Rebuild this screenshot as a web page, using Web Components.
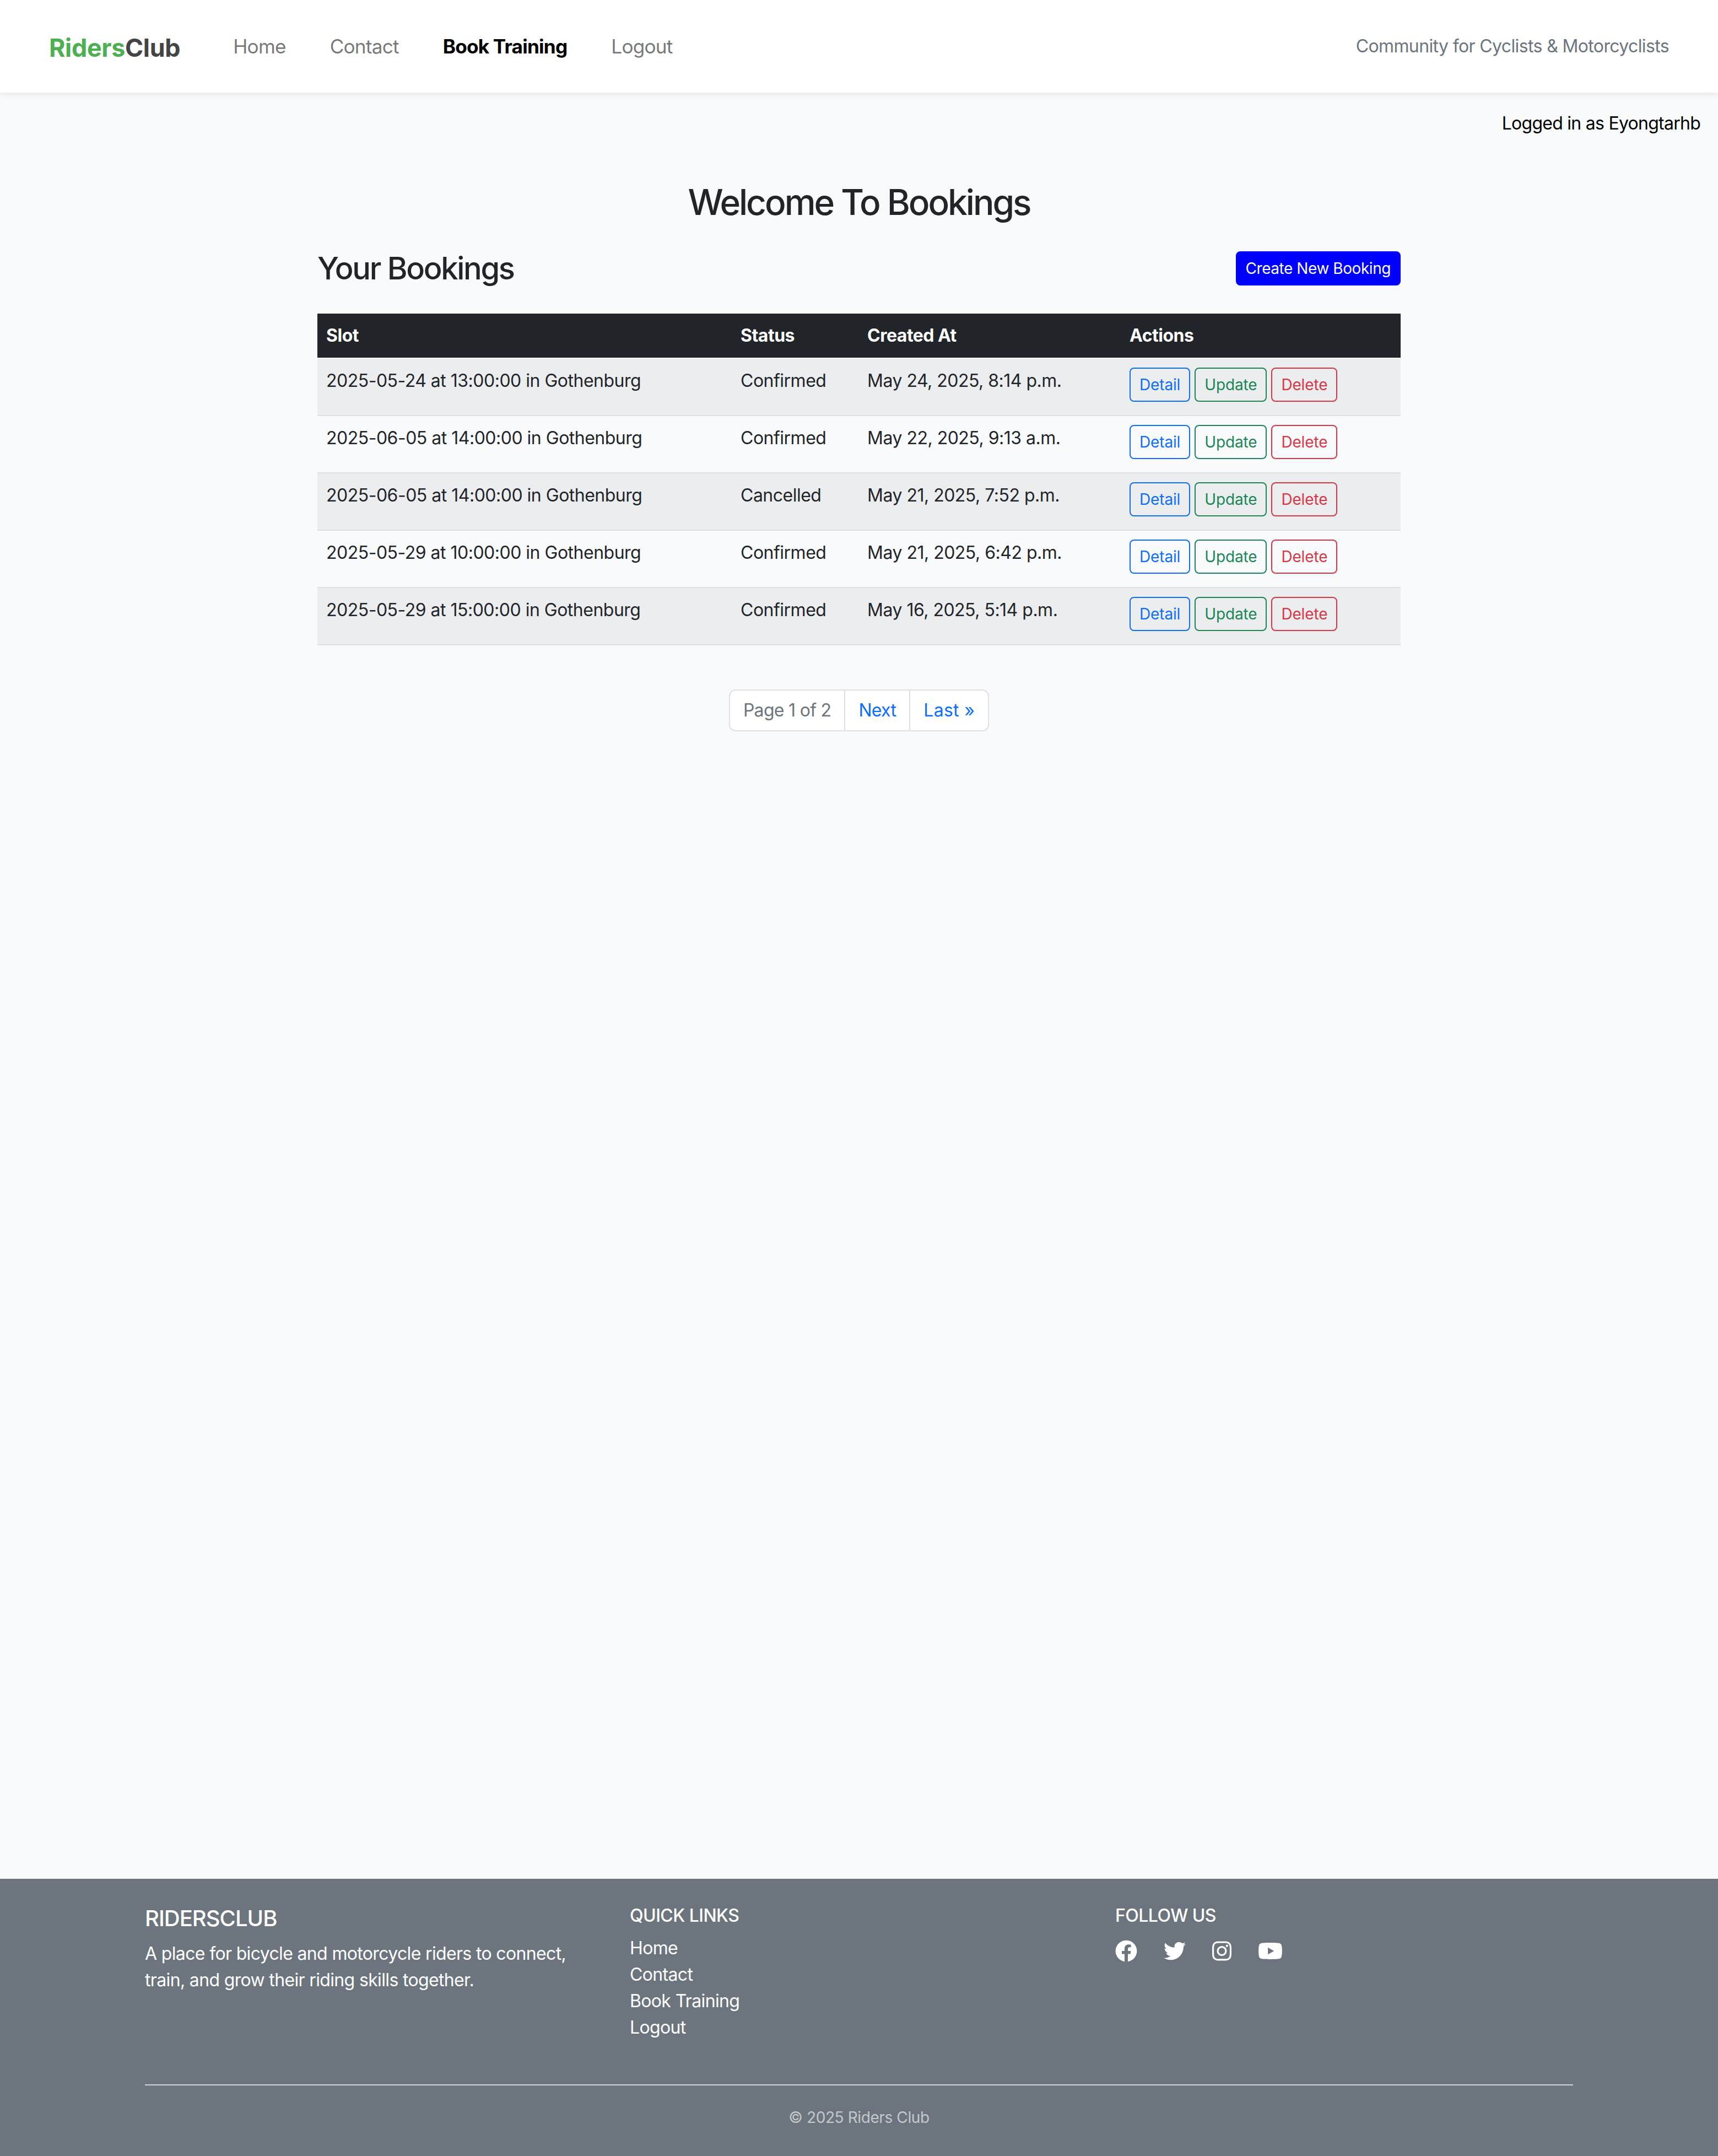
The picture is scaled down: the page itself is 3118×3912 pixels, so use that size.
<!DOCTYPE html>
<html lang="en">
<head>
<meta charset="utf-8">
<title>Bookings</title>
<style>
    html, body { margin: 0; padding: 0; }
    body {
        min-height: 3912px;
        display: flex;
        flex-direction: column;
        background: #f9fafb;
        color: #212529;
        font-family: Inter, "Liberation Sans", sans-serif;
        font-size: 32px;
        line-height: 1.5;
    }
    bookings-page { flex: 1; }
</style>
</head>
<body>
    <site-navbar></site-navbar>
    <bookings-page>
        <booking-table>
            <booking-row slot-time="2025-05-24 at 13:00:00 in Gothenburg" status="Confirmed" created="May 24, 2025, 8:14 p.m."></booking-row>
            <booking-row slot-time="2025-06-05 at 14:00:00 in Gothenburg" status="Confirmed" created="May 22, 2025, 9:13 a.m."></booking-row>
            <booking-row slot-time="2025-06-05 at 14:00:00 in Gothenburg" status="Cancelled" created="May 21, 2025, 7:52 p.m."></booking-row>
            <booking-row slot-time="2025-05-29 at 10:00:00 in Gothenburg" status="Confirmed" created="May 21, 2025, 6:42 p.m."></booking-row>
            <booking-row slot-time="2025-05-29 at 15:00:00 in Gothenburg" status="Confirmed" created="May 16, 2025, 5:14 p.m."></booking-row>
        </booking-table>
        <page-nav></page-nav>
    </bookings-page>
    <site-footer></site-footer>

<script>
// navbar on top of every page
var template_navbar = document.createElement("template");
template_navbar.innerHTML = `
<style>
    :host {
        display: flex;
        align-items: center;
        height: 168px;
        padding: 0 89px;
        background: #fff;
        box-shadow: 0 2px 12px rgba(0,0,0,.1);
        position: relative;
    }
    .brand { font-size: 44.8px; font-weight: 700; letter-spacing: -0.3px; color: #444; margin-right: 96px; position: relative; top: 4px; }
    .brand span { color: #4caf50; }
    nav { display: flex; gap: 80px; flex: 1; font-size: 35.2px; letter-spacing: -0.8px; }
    nav a { color: rgba(0,0,0,.55); text-decoration: none; }
    nav a.active { color: #000; font-weight: 700; }
    .tag { color: #6c757d; letter-spacing: -0.63px; }
</style>
<div class="brand"><span>Riders</span>Club</div>
<nav>
    <a href="#">Home</a>
    <a href="#">Contact</a>
    <a href="#" class="active">Book Training</a>
    <a href="#">Logout</a>
</nav>
<div class="tag">Community for Cyclists &amp; Motorcyclists</div>
`;
class SiteNavbar extends HTMLElement {
    constructor(){
        super();
        this.attachShadow({mode:"open"});
    }
    connectedCallback(){
        this.shadowRoot.appendChild(template_navbar.content.cloneNode(true));
    }
}
customElements.define("site-navbar", SiteNavbar);

// headings + the slot for table and pagination
var template_page = document.createElement("template");
template_page.innerHTML = `
<style>
    :host { display: block; }
    .user { text-align: right; padding: 32px 32px 0 0; color: #000; letter-spacing: -0.74px; }
    .wrap { width: 1966px; margin: 81px auto 0; }
    h2 { margin: 0 0 48px; font-size: 64px; font-weight: 500; line-height: 1.2; letter-spacing: -3px; text-align: center; }
    .head { display: flex; justify-content: space-between; align-items: center; margin-bottom: 48px; }
    h3 { margin: 0; font-size: 56px; font-weight: 500; line-height: 1.2; letter-spacing: -2.3px; }
    .create {
        display: block;
        padding: 8px 16px;
        border: 2px solid #00f;
        border-radius: 8px;
        background: #00f;
        color: #fff;
        font-size: 28px;
        line-height: 42px;
        letter-spacing: -0.44px;
        text-decoration: none;
    }
</style>
<div class="user">Logged in as Eyongtarhb</div>
<div class="wrap">
    <h2>Welcome To Bookings</h2>
    <div class="head">
        <h3>Your Bookings</h3>
        <a href="#" class="create">Create New Booking</a>
    </div>
    <slot></slot>
</div>
`;
class BookingsPage extends HTMLElement {
    constructor(){
        super();
        this.attachShadow({mode:"open"});
    }
    connectedCallback(){
        this.shadowRoot.appendChild(template_page.content.cloneNode(true));
    }
}
customElements.define("bookings-page", BookingsPage);

// table header, rows come in through the slot
var template_table = document.createElement("template");
template_table.innerHTML = `
<style>
    :host { display: block; }
    .thead {
        display: grid;
        grid-template-columns: 752px 230px 476px 508px;
        background: #212529;
        color: #fff;
        font-weight: 700;
        letter-spacing: -0.5px;
        margin-bottom: 2px;
    }
    .thead div { padding: 16px; }
</style>
<div class="thead">
    <div>Slot</div><div>Status</div><div>Created At</div><div>Actions</div>
</div>
<slot></slot>
`;
class BookingTable extends HTMLElement {
    constructor(){
        super();
        this.attachShadow({mode:"open"});
    }
    connectedCallback(){
        this.shadowRoot.appendChild(template_table.content.cloneNode(true));
    }
}
customElements.define("booking-table", BookingTable);

var template_row = document.createElement("template");
template_row.innerHTML = `
<style>
    :host {
        display: grid;
        grid-template-columns: 752px 230px 476px 508px;
        height: 104px;
        box-sizing: border-box;
        border-bottom: 2px solid #dee2e6;
        letter-spacing: -0.5px;
    }
    :host(:nth-child(odd)) { background: #ecedee; }
    .cell { padding: 16px; }
    .actions { display: flex; gap: 8px; align-items: flex-start; }
    a {
        display: block;
        padding: 8px 16px;
        border: 2px solid;
        border-radius: 8px;
        font-size: 28px;
        line-height: 42px;
        letter-spacing: -0.15px;
        text-decoration: none;
    }
    .blue { color: #0d6efd; }
    .green { color: #198754; }
    .red { color: #dc3545; }
</style>
<div class="cell" id="slot"></div>
<div class="cell" id="status"></div>
<div class="cell" id="created"></div>
<div class="cell actions">
    <a href="#" class="blue">Detail</a>
    <a href="#" class="green">Update</a>
    <a href="#" class="red">Delete</a>
</div>
`;
class BookingRow extends HTMLElement {
    constructor(){
        super();
        this.attachShadow({mode:"open"});
    }
    connectedCallback(){
        this.shadowRoot.appendChild(template_row.content.cloneNode(true));
        this.shadowRoot.querySelector('#slot').textContent = this.getAttribute("slot-time");
        this.shadowRoot.querySelector('#status').textContent = this.getAttribute("status");
        this.shadowRoot.querySelector('#created').textContent = this.getAttribute("created");
    }
}
customElements.define("booking-row", BookingRow);

var template_pagenav = document.createElement("template");
template_pagenav.innerHTML = `
<style>
    :host { display: flex; justify-content: center; margin-top: 80px; }
    .pages { display: flex; background: #fff; border: 2px solid #dee2e6; border-radius: 12px; letter-spacing: -0.7px; }
    .pages > * { padding: 12px 24px; text-decoration: none; color: #0d6efd; }
    .pages > * + * { border-left: 2px solid #dee2e6; }
    .pages span { color: #6c757d; }
    .pages .last { letter-spacing: 0.3px; }
</style>
<div class="pages">
    <span>Page 1 of 2</span>
    <a href="#">Next</a>
    <a href="#" class="last">Last »</a>
</div>
`;
class PageNav extends HTMLElement {
    constructor(){
        super();
        this.attachShadow({mode:"open"});
    }
    connectedCallback(){
        this.shadowRoot.appendChild(template_pagenav.content.cloneNode(true));
    }
}
customElements.define("page-nav", PageNav);

// footer, three columns then copyright
var template_footer = document.createElement("template");
template_footer.innerHTML = `
<style>
    :host { display: block; background: #6c757d; color: #fff; padding: 48px 0 49px; letter-spacing: -0.65px; }
    .wrap { width: 2592px; margin: 0 auto; }
    .cols { display: grid; grid-template-columns: 880px 881px 831px; }
    h5 { margin: 0 0 16px; font-size: 40px; font-weight: 500; line-height: 1.2; letter-spacing: -1px; }
    h6 { margin: 0 0 16px; font-size: 32px; font-weight: 500; line-height: 1.2; letter-spacing: -0.55px; }
    p { margin: 0; width: 800px; }
    a { display: block; color: #fff; text-decoration: none; }
    .icons { display: flex; gap: 48px; align-items: center; height: 40px; margin-top: 25px; }
    .icons svg { height: 40px; display: block; fill: #fff; }
    hr { margin: 79px 0 37px; border: 0; border-top: 2px solid #d3d6d8; }
    .copy { text-align: center; font-size: 28px; letter-spacing: -0.4px; color: #c4c8cb; }
</style>
<div class="wrap">
    <div class="cols">
        <div>
            <h5>RIDERSCLUB</h5>
            <p>A place for bicycle and motorcycle riders to connect, train, and grow their riding skills together.</p>
        </div>
        <div>
            <h6>QUICK LINKS</h6>
            <a href="#">Home</a>
            <a href="#">Contact</a>
            <a href="#">Book Training</a>
            <a href="#">Logout</a>
        </div>
        <div>
            <h6>FOLLOW US</h6>
            <div class="icons">
                <svg viewBox="0 0 512 512"><path d="M504 256C504 119 393 8 256 8S8 119 8 256c0 123.78 90.69 226.38 209.25 245V327.69h-63V256h63v-54.64c0-62.15 37-96.48 93.67-96.48 27.14 0 55.52 4.84 55.52 4.84v61h-31.28c-30.8 0-40.41 19.12-40.41 38.73V256h68.78l-11 71.69h-57.78V501C413.31 482.38 504 379.78 504 256z"/></svg>
                <svg viewBox="0 0 512 512"><path d="M459.37 151.716c.325 4.548.325 9.097.325 13.645 0 138.72-105.583 298.558-298.558 298.558-59.452 0-114.68-17.219-161.137-47.106 8.447.974 16.568 1.299 25.34 1.299 49.055 0 94.213-16.568 130.274-44.832-46.132-.975-84.792-31.188-98.112-72.772 6.498.974 12.995 1.624 19.818 1.624 9.421 0 18.843-1.3 27.614-3.573-48.081-9.747-84.143-51.98-84.143-102.985v-1.299c13.969 7.797 30.214 12.67 47.431 13.319-28.264-18.843-46.781-51.005-46.781-87.391 0-19.492 5.197-37.36 14.294-52.954 51.655 63.675 129.3 105.258 216.365 109.807-1.624-7.797-2.599-15.918-2.599-24.04 0-57.828 46.782-104.934 104.934-104.934 30.213 0 57.502 12.67 76.67 33.137 23.715-4.548 46.456-13.32 66.599-25.34-7.798 24.366-24.366 44.833-46.132 57.827 21.117-2.273 41.584-8.122 60.426-16.243-14.292 20.791-32.161 39.308-52.628 54.253z"/></svg>
                <svg viewBox="0 0 448 512"><path d="M224.1 141c-63.6 0-114.9 51.3-114.9 114.9s51.3 114.9 114.9 114.9S339 319.5 339 255.9 287.7 141 224.1 141zm0 189.6c-41.1 0-74.7-33.5-74.7-74.7s33.5-74.7 74.7-74.7 74.7 33.5 74.7 74.7-33.6 74.7-74.7 74.7zm146.4-194.3c0 14.9-12 26.8-26.8 26.8-14.9 0-26.8-12-26.8-26.8s12-26.8 26.8-26.8 26.8 12 26.8 26.8zm76.1 27.2c-1.7-35.9-9.9-67.7-36.2-93.9-26.2-26.2-58-34.4-93.9-36.2-37-2.1-147.9-2.1-184.9 0-35.8 1.7-67.6 9.9-93.9 36.1s-34.4 58-36.2 93.9c-2.1 37-2.1 147.9 0 184.9 1.7 35.9 9.9 67.7 36.2 93.9s58 34.4 93.9 36.2c37 2.1 147.9 2.1 184.9 0 35.9-1.7 67.7-9.9 93.9-36.2 26.2-26.2 34.4-58 36.2-93.9 2.1-37 2.1-147.8 0-184.8zM398.8 388c-7.8 19.6-22.9 34.7-42.6 42.6-29.5 11.7-99.5 9-132.1 9s-102.7 2.6-132.1-9c-19.6-7.8-34.7-22.9-42.6-42.6-11.7-29.5-9-99.5-9-132.1s-2.6-102.7 9-132.1c7.8-19.6 22.9-34.7 42.6-42.6 29.5-11.7 99.5-9 132.1-9s102.7-2.6 132.1 9c19.6 7.8 34.7 22.9 42.6 42.6 11.7 29.5 9 99.5 9 132.1s2.7 102.7-9 132.1z"/></svg>
                <svg viewBox="0 0 576 512"><path d="M549.655 124.083c-6.281-23.65-24.787-42.276-48.284-48.597C458.781 64 288 64 288 64S117.22 64 74.629 75.486c-23.497 6.322-42.003 24.947-48.284 48.597-11.412 42.867-11.412 132.305-11.412 132.305s0 89.438 11.412 132.305c6.281 23.65 24.787 41.5 48.284 47.821C117.22 448 288 448 288 448s170.78 0 213.371-11.486c23.497-6.321 42.003-24.171 48.284-47.821 11.412-42.867 11.412-132.305 11.412-132.305s0-89.438-11.412-132.305zm-317.51 213.508V175.185l142.739 81.205-142.739 81.201z"/></svg>
            </div>
        </div>
    </div>
    <hr>
    <div class="copy">© 2025 Riders Club</div>
</div>
`;
class SiteFooter extends HTMLElement {
    constructor(){
        super();
        this.attachShadow({mode:"open"});
    }
    connectedCallback(){
        this.shadowRoot.appendChild(template_footer.content.cloneNode(true));
    }
}
customElements.define("site-footer", SiteFooter);
</script>
</body>
</html>
